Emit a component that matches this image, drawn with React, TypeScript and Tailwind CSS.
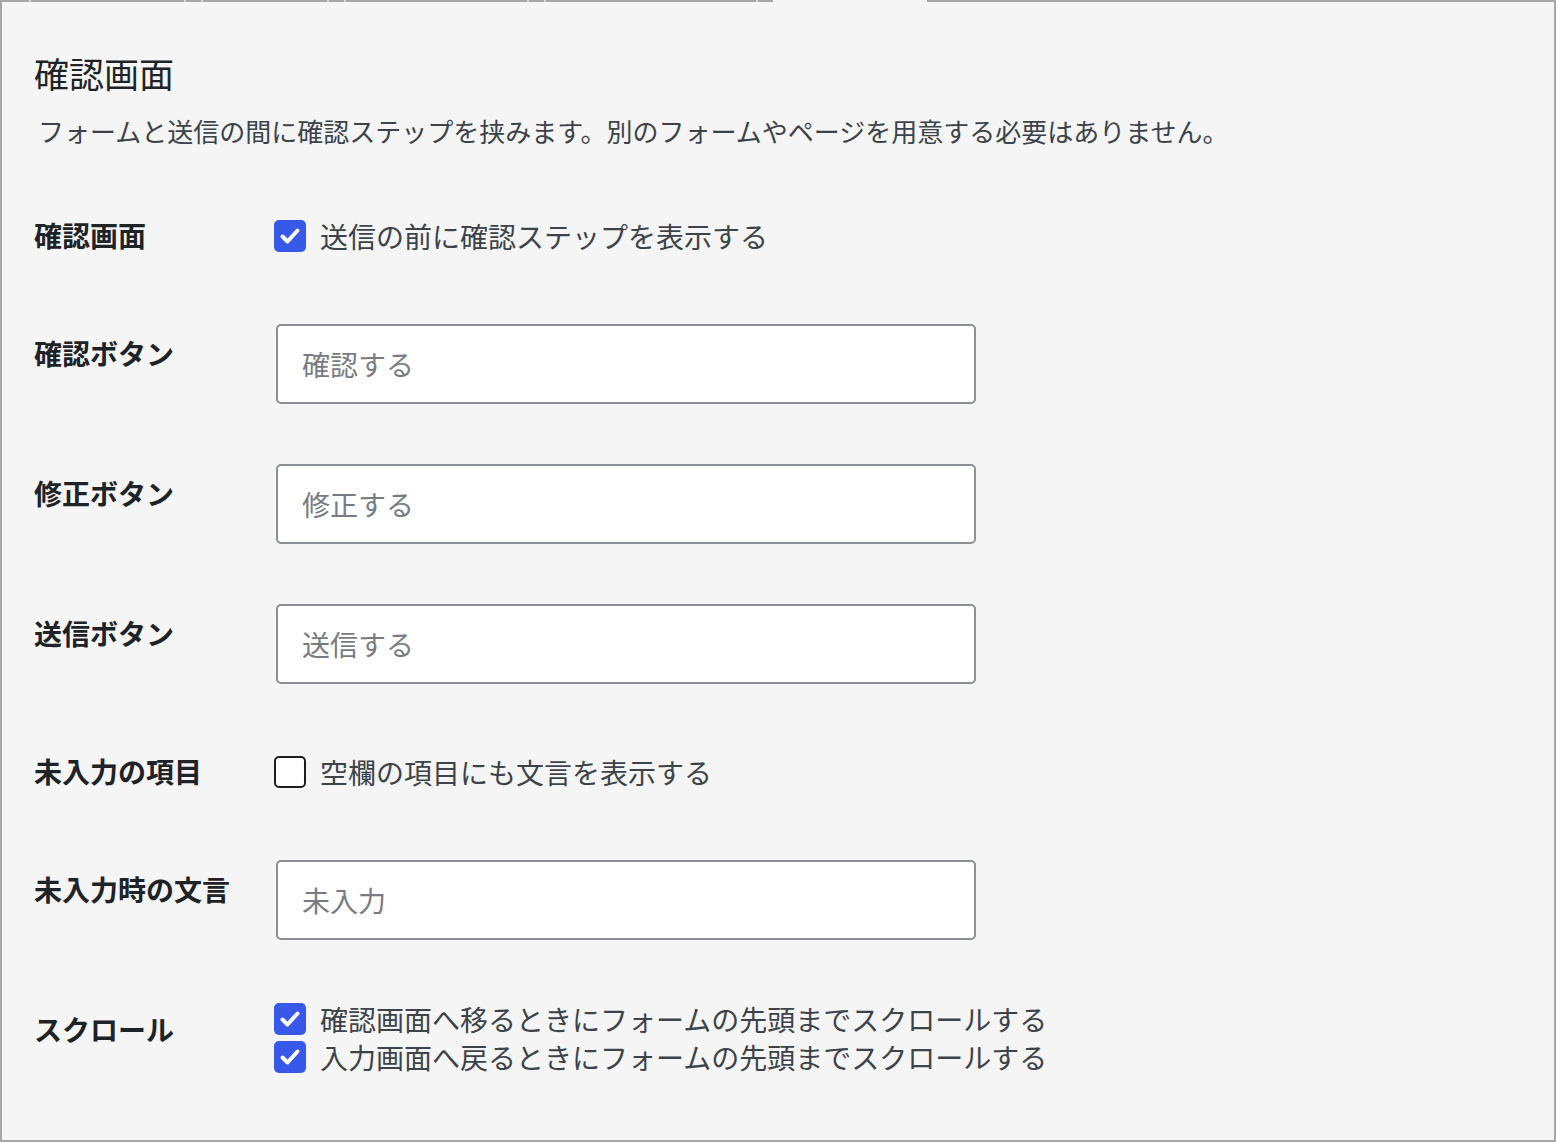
import React from 'react';

const font = { fontFamily: '"Noto Sans CJK JP", "Noto Sans", sans-serif' };

// tab strip edge along the top of the panel: [start, end, kind]
const edge: [number, number, 'line' | 'tick' | 'open'][] = [
  [0, 29, 'line'],
  [29, 31, 'tick'],
  [31, 184, 'line'],
  [184, 186, 'tick'],
  [186, 201, 'line'],
  [201, 203, 'tick'],
  [203, 327, 'line'],
  [327, 329, 'tick'],
  [329, 344, 'line'],
  [344, 346, 'tick'],
  [346, 527, 'line'],
  [527, 529, 'tick'],
  [529, 544, 'line'],
  [544, 546, 'tick'],
  [546, 756, 'line'],
  [756, 758, 'tick'],
  [758, 773, 'line'],
  [773, 927, 'open'],
  [927, 1556, 'line'],
];

function Checkbox({ checked }: { checked: boolean }) {
  if (checked) {
    return (
      <span className="flex h-[32px] w-[32px] shrink-0 items-center justify-center rounded-[5px] bg-[#3858e9]">
        <svg width="24" height="24" viewBox="0 0 24 24" fill="none">
          <path d="M4.5 12.5l5 5L19.5 6.5" stroke="#fff" strokeWidth="4" strokeLinecap="round" strokeLinejoin="round" />
        </svg>
      </span>
    );
  }
  return <span className="h-[32px] w-[32px] shrink-0 rounded-[5px] border-2 border-[#1e1e1e] bg-white" />;
}

function CheckLine({ checked, text, h }: { checked: boolean; text: string; h: string }) {
  return (
    <label className={`flex items-center gap-[14px] ${h}`}>
      <Checkbox checked={checked} />
      <span className="text-[28px] leading-none text-[#3c434a]">{text}</span>
    </label>
  );
}

function Label({ text, pt }: { text: string; pt: string }) {
  return (
    <div className={`w-[240px] shrink-0 ${pt} text-[28px] font-bold leading-[38px] text-[#1d2327]`}>{text}</div>
  );
}

function InputRow({ label, placeholder }: { label: string; placeholder: string }) {
  return (
    <div className="flex">
      <Label text={label} pt="pt-[40px]" />
      <div className="py-[30px] pl-[2px]">
        <input
          readOnly
          placeholder={placeholder}
          className="block h-[80px] w-[700px] rounded-[5px] border-2 border-[#8c8f94] bg-white px-[24px] text-[28px] text-[#2c3338] outline-none placeholder:text-[#787c82]"
          style={font}
        />
      </div>
    </div>
  );
}

function CheckRow({ label, checked, text }: { label: string; checked: boolean; text: string }) {
  return (
    <div className="flex">
      <Label text={label} pt="pt-[38px]" />
      <div className="py-[40px]">
        <CheckLine checked={checked} text={text} h="h-[36px]" />
      </div>
    </div>
  );
}

export default function App() {
  return (
    <div className="h-[1142px] w-[1556px] bg-[#f5f5f5]" style={font}>
      <div className="flex h-[2px]">
        {edge.map(([a, b, kind]) => (
          <div
            key={a}
            style={{ width: b - a }}
            className={kind === 'line' ? 'bg-[#a7a7a7]' : kind === 'tick' ? 'bg-[#d4d4d4]' : 'bg-[#f5f5f5]'}
          />
        ))}
      </div>
      <div className="flex h-[1140px] flex-col border-x-2 border-b-2 border-[#a7a7a7] pl-[32px] pt-[49px]">
        <h2 className="text-[35px] font-normal leading-[44px] text-[#1d2327]">確認画面</h2>
        <p className="mt-[16px] pl-[4px] text-[26px] leading-[39px] text-[#3c434a]">
          フォームと送信の間に確認ステップを挟みます。別のフォームやページを用意する必要はありません。
        </p>

        <div className="mt-[28px] flex flex-col">
          <CheckRow label="確認画面" checked text="送信の前に確認ステップを表示する" />
          <InputRow label="確認ボタン" placeholder="確認する" />
          <InputRow label="修正ボタン" placeholder="修正する" />
          <InputRow label="送信ボタン" placeholder="送信する" />
          <CheckRow label="未入力の項目" checked={false} text="空欄の項目にも文言を表示する" />
          <InputRow label="未入力時の文言" placeholder="未入力" />
          <div className="flex">
            <Label text="スクロール" pt="pt-[40px]" />
            <div className="flex flex-col py-[30px]">
              <CheckLine checked text="確認画面へ移るときにフォームの先頭までスクロールする" h="h-[38px]" />
              <CheckLine checked text="入力画面へ戻るときにフォームの先頭までスクロールする" h="h-[38px]" />
            </div>
          </div>
        </div>
      </div>
    </div>
  );
}
